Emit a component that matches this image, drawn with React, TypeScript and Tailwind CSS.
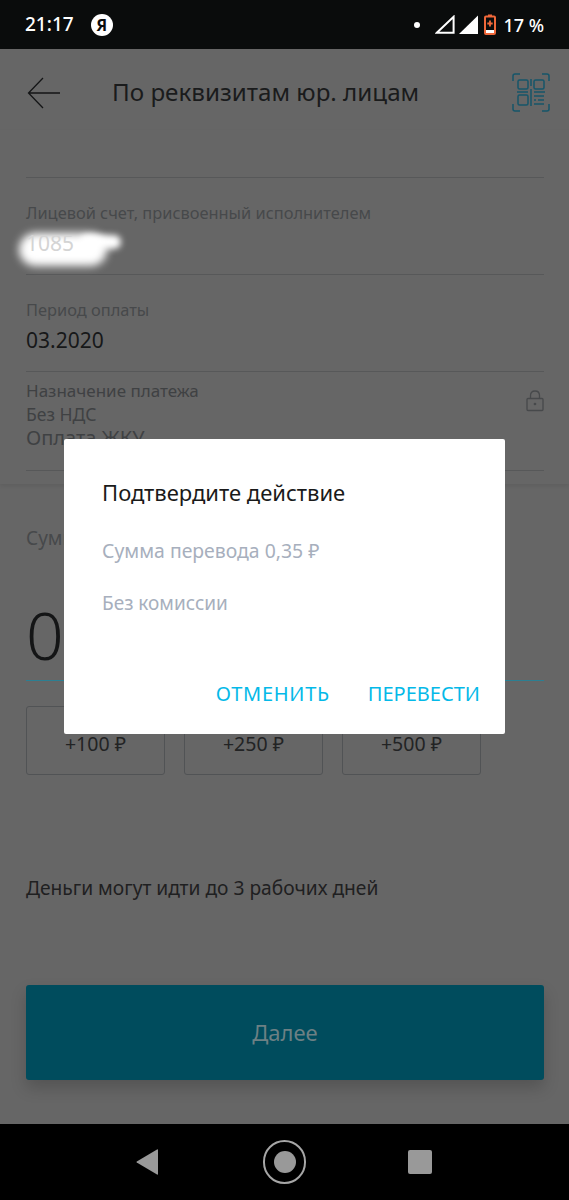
import React from "react";

const font = { fontFamily: '"Noto Sans", "Open Sans", sans-serif' };

const Field = ({ label, value, valueClass }: { label: string; value: string; valueClass: string }) => (
  <div className="h-[97px] border-b border-[#575859] flex flex-col">
    <span className="mt-[24px] text-[16.4px] leading-[22px] text-[#47494b]">{label}</span>
    <span className={`mt-[5px] text-[21px] leading-[28px] ${valueClass}`}>{value}</span>
  </div>
);

const StatusBar = () => (
  <div className="h-[49px] bg-[#0a0c0c] flex items-center pl-[25px] pr-[25px] text-white shrink-0">
    <span className="text-[19px] font-medium leading-none">21:17</span>
    <span className="ml-[17px] w-[22px] h-[22px] rounded-full bg-white text-[#0a0c0c] flex items-center justify-center text-[16px] font-bold leading-none">Я</span>
    <span className="ml-auto w-[6px] h-[6px] rounded-full bg-white" />
    <svg className="ml-[15px]" width="20" height="19" viewBox="0 0 20 19" fill="none">
      <path d="M1.800 17.800 L18.600 1.800 V17.800 Z" stroke="#fff" strokeWidth="2" />
    </svg>
    <svg className="ml-[4px]" width="19" height="19" viewBox="0 0 19 19">
      <path d="M0 19 L19 0.500 V19 Z" fill="#fff" />
    </svg>
    <svg className="ml-[6px]" width="12" height="21" viewBox="0 0 12 21" fill="none">
      <path d="M4 0.500 h4 v2 h-4 Z" fill="#f0683a" />
      <rect x="1" y="2.500" width="10" height="17.500" rx="1" stroke="#f0683a" strokeWidth="2" />
      <rect x="2" y="16" width="8" height="3" fill="#fff" />
      <path d="M6 6.500 v6 M3.300 9.500 h5.400" stroke="#f0683a" strokeWidth="1.800" />
    </svg>
    <span className="ml-[7px] text-[18px] font-medium leading-none">17 %</span>
  </div>
);

const QrIcon = () => (
  <svg width="38" height="39" viewBox="0 0 38 39" fill="none" stroke="#16566a" strokeWidth="1.500">
    <path d="M1 8 V3 Q1 1 3 1 H8 M30 1 H35 Q37 1 37 3 V8 M37 31 V36 Q37 38 35 38 H30 M8 38 H3 Q1 38 1 36 V31" />
    <rect x="6" y="7" width="10" height="9" rx="1.500" />
    <rect x="22" y="7" width="10" height="9" rx="1.500" />
    <rect x="6" y="22" width="10" height="10" rx="1.500" />
    <path d="M19 6 V13 M19 16 V33 M5 19 H16 M22 19 H33 M22 23 H32 M26 27 H32 M22 31 H32 M22 27 H24" />
  </svg>
);

const Amount = ({ text }: { text: string }) => (
  <div className="w-[139px] h-[69px] border border-[#515355] rounded-[3px] flex items-end justify-center pb-[21px] text-[19.500px] leading-none text-[#222324]">
    {text}
  </div>
);

export default function App() {
  return (
    <div style={font} className="relative w-[569px] h-[1200px] overflow-hidden bg-[#666666] flex flex-col">
      <StatusBar />

      <div className="h-[81px] flex items-center pt-[6px] pl-[27px] pr-[19px] shrink-0">
        <svg width="34" height="32" viewBox="0 0 34 32" fill="none" stroke="#141516" strokeWidth="1.300">
          <path d="M33 16 H1.500 M16 1 L1.500 16 L16 31" />
        </svg>
        <span className="ml-[51px] text-[24.2px] leading-none text-[#1a1b1c]">По реквизитам юр. лицам</span>
        <span className="ml-auto flex"><QrIcon /></span>
      </div>

      <div className="h-[354px] shrink-0 pl-[26px] pr-[25px] flex flex-col relative shadow-[0_2px_4px_rgba(0,0,0,0.08)]">
        <div className="h-[48px] border-b border-[#575859] shrink-0" />
        <Field label="Лицевой счет, присвоенный исполнителем" value="1085" valueClass="relative z-10 text-[#d4d4d4]" />
        <Field label="Период оплаты" value="03.2020" valueClass="text-[#171819]" />
        <div className="h-[99px] border-b border-[#575859] flex justify-between">
          <div className="flex flex-col pt-[8px] text-[17.5px] leading-[22px] text-[#3f4143]">
            <span className="text-[17px]">Назначение платежа</span>
            <span className="mt-[1px]">Без НДС</span>
            <span className="mt-[2px] text-[20px]">Оплата ЖКУ</span>
          </div>
          <svg className="mt-[18px]" width="18" height="22" viewBox="0 0 18 22" fill="none" stroke="#47494b" strokeWidth="1.300">
            <rect x="1" y="8.500" width="16" height="12" rx="1" />
            <path d="M4.500 8.500 V5.500 Q4.500 1 9 1 Q13.500 1 13.500 5.500 V8.500" />
            <circle cx="9" cy="14" r="0.700" fill="#47494b" />
          </svg>
        </div>
      </div>

      <div className="h-[346px] shrink-0 pl-[26px] pr-[25px] flex flex-col">
        <span className="mt-[42px] text-[19px] leading-[24px] text-[#47494b]">Сумма</span>
        <span className="mt-[46px] text-[66px] leading-[76px] font-light text-[#141516]">0</span>
        <div className="mt-[8px] h-[1px] bg-[#2c7f92]" />
        <div className="mt-[25px] flex gap-[19px]">
          <Amount text="+100 ₽" />
          <Amount text="+250 ₽" />
          <Amount text="+500 ₽" />
        </div>
      </div>

      <div className="h-[110px] shrink-0 pl-[26px] pr-[25px] pt-[6px] flex items-center">
        <span className="text-[19.2px] leading-none text-[#1f2021]">Деньги могут идти до 3 рабочих дней</span>
      </div>

      <div className="flex-1 pl-[26px] pr-[25px] pt-[45px]">
        <button className="w-full h-[95px] rounded-[3px] bg-[#004c5d] text-[22px] text-[#6c8084] shadow-[0_8px_16px_rgba(0,0,0,0.18)]">Далее</button>
      </div>

      <div className="h-[76px] bg-black shrink-0 relative">
        <svg width="22" height="26" viewBox="0 0 22 26" className="absolute left-[136px] top-[25px]">
          <path d="M22 1 V25 Q22 26 21 25.500 L0.800 13.500 Q0 13 0.800 12.500 L21 0.500 Q22 0 22 1 Z" fill="#999999" />
        </svg>
        <div className="absolute left-[263px] top-[16px] w-[43px] h-[44px] rounded-full border-[2px] border-[#a6a6a6] flex items-center justify-center">
          <div className="w-[22px] h-[22px] rounded-full bg-[#999999]" />
        </div>
        <div className="absolute left-[408px] top-[26px] w-[24px] h-[24px] rounded-[2px] bg-[#999999]" />
      </div>

      {/* redacted account number */}
      <div className="absolute left-[19px] top-[233px] w-[88px] h-[33px] rounded-full bg-white blur-[4px]" />
      <div className="absolute left-[80px] top-[235px] w-[41px] h-[14px] rounded-full bg-white blur-[3px]" />

      {/* dialog */}
      <div className="absolute left-[64px] top-[439px] w-[441px] h-[295px] bg-white rounded-[2px] flex flex-col pl-[38px] pr-[25px]">
        <span className="mt-[39px] text-[22px] leading-[28px] text-[#1a1a1a]">Подтвердите действие</span>
        <span className="mt-[32px] text-[19.400px] leading-[26px] text-[#a7afbd]">Сумма перевода 0,35 ₽</span>
        <span className="mt-[26px] text-[19px] leading-[26px] text-[#a7afbd]">Без комиссии</span>
        <div className="mt-auto mb-[30px] flex justify-end gap-[38px] text-[20px] leading-none text-[#04b9e8]">
          <span className="tracking-[0.7px]">ОТМЕНИТЬ</span>
          <span>ПЕРЕВЕСТИ</span>
        </div>
      </div>
    </div>
  );
}
